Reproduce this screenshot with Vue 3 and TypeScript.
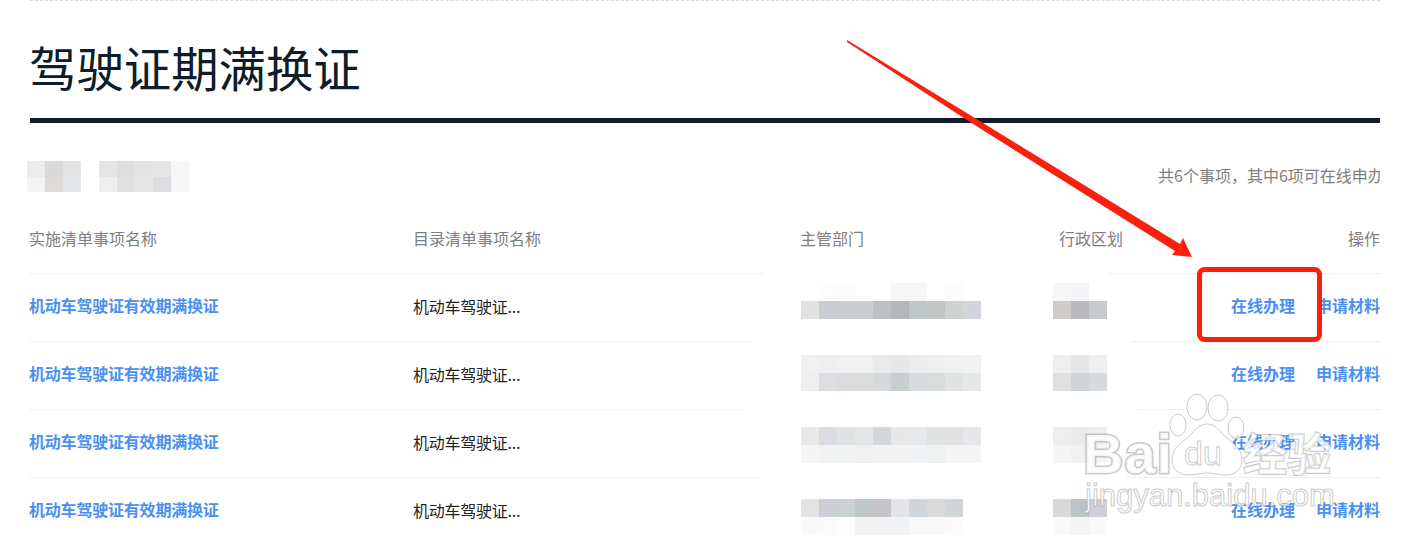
<script setup lang="ts">
type Row = {
  lineLeft: number
  lineRight: number
  shift: number
  dept: string[][]
  area: string[][]
}

const fullName = '机动车驾驶证有效期满换证'

const rows: Row[] = [
  {
    lineLeft: 733,
    lineRight: 271,
    shift: 9,
    dept: [
      ['#ffffff', '#fdfdfd', '#fcfcfc', '#ffffff', '#ffffff', '#f6f6f6', '#f5f6f5', '#ffffff', '#fcfcfc', '#ffffff'],
      ['#e0e2df', '#cbccd1', '#c9cdcf', '#cbcccd', '#bcc2c4', '#b4b6bb', '#bfc6c8', '#c3c6c4', '#d0d2d0', '#d3d5da']
    ],
    area: [
      ['#f6f6f6', '#f3f4f6', '#ffffff'],
      ['#cdccca', '#b9b9be', '#c8cbce']
    ]
  },
  {
    lineLeft: 720,
    lineRight: 249,
    shift: 13,
    dept: [
      ['#eff0f0', '#eeeef0', '#f0f0f1', '#f0f0f1', '#e9ebea', '#e7e9e8', '#ebecee', '#eeefef', '#eff1f0', '#f0f1f1'],
      ['#eeeeee', '#dddce1', '#d9dcde', '#dadcde', '#d5d9db', '#c9cfd1', '#d8dbdd', '#d9dcdd', '#e1e3e2', '#e6e7eb']
    ],
    area: [
      ['#eeeeee', '#e5e6e8', '#eeeff0'],
      ['#dfdfdf', '#d0d4d6', '#d7dadd']
    ]
  },
  {
    lineLeft: 714,
    lineRight: 243,
    shift: 17,
    dept: [
      ['#e9e9e8', '#dcdbe2', '#dfe2e3', '#e5e6e8', '#d3d8da', '#e7e8ea', '#e7e9ea', '#e1e3e3', '#e1e3e2', '#e6e7eb'],
      ['#f5f5f5', '#f2f3f5', '#f2f3f3', '#f0f0f0', '#f3f3f5', '#f3f3f4', '#f0f2f3', '#eff0f0', '#f5f5f5', '#f3f4f5']
    ],
    area: [
      ['#eeeeee', '#ebebed', '#efeff0'],
      ['#f5f5f5', '#f1f1f2', '#f5f5f6']
    ]
  },
  {
    lineLeft: 731,
    lineRight: 253,
    shift: 21,
    dept: [
      ['#e3e3e1', '#cdced6', '#cbd2d2', '#c1c7c9', '#c7c5cb', '#e3e4e8', '#d0d5da', '#dadbd9', '#d0d5da'],
      ['#fafafa', '#fbfbfb', '#fcfdfc', '#f3f3f4', '#f3f3f4', '#f2f3f5', '#f8f8f8', '#f8f8f8', '#fbfbfb']
    ],
    area: [
      ['#d7d8da', '#bcc3c5', '#cdd0d5'],
      ['#fafafa', '#f3f4f4', '#fafafa']
    ]
  }
]

const badgeA = [
  ['#ececed', '#dad9d8', '#e3e4e6'],
  ['#f4f4f4', '#dcdbd9', '#e5e6e8']
]
const badgeB = [
  ['#e5e5e6', '#dddee0', '#e4e4e5', '#e6e6e8', '#f7f7f7'],
  ['#eeeeee', '#e0e1e3', '#e5e5e6', '#dcdde0', '#f7f7f7']
]
</script>

<template>
  <div class="page">
    <div class="wrap">
      <h1 class="title"><span class="title-text">驾驶证期满换证</span></h1>

      <div class="summary">
        <div class="tags">
          <div class="mosaic tag">
            <div v-for="(line, i) in badgeA" :key="i" class="mline">
              <span v-for="(c, j) in line" :key="j" class="cell" :style="{ background: c }"></span>
            </div>
          </div>
          <div class="mosaic tag">
            <div v-for="(line, i) in badgeB" :key="i" class="mline">
              <span v-for="(c, j) in line" :key="j" class="cell" :style="{ background: c }"></span>
            </div>
          </div>
        </div>
        <div class="count">共6个事项，其中6项可在线申办</div>
      </div>

      <div class="grid head">
        <div>实施清单事项名称</div>
        <div>目录清单事项名称</div>
        <div>主管部门</div>
        <div class="head-area">行政区划</div>
        <div class="head-op">操作</div>
      </div>

      <div v-for="(row, idx) in rows" :key="idx" class="row">
        <div class="rule">
          <i class="seg" :style="{ width: row.lineLeft + 'px' }"></i>
          <i class="seg" :style="{ width: row.lineRight + 'px' }"></i>
        </div>
        <div class="grid body">
          <a class="link name">{{ fullName }}</a>
          <div class="catalog">机动车驾驶证...</div>
          <div class="mosaic dept" :style="{ marginTop: row.shift + 'px' }">
            <div v-for="(line, i) in row.dept" :key="i" class="mline">
              <span v-for="(c, j) in line" :key="j" class="cell" :style="{ background: c }"></span>
            </div>
          </div>
          <div class="mosaic area" :style="{ marginTop: row.shift + 'px' }">
            <div v-for="(line, i) in row.area" :key="i" class="mline">
              <span v-for="(c, j) in line" :key="j" class="cell" :style="{ background: c }"></span>
            </div>
          </div>
          <div class="ops">
            <a class="link">在线办理</a>
            <a class="link">申请材料</a>
          </div>
        </div>
      </div>
    </div>

    <svg class="overlay" width="1410" height="545" viewBox="0 0 1410 545">
      <g class="mark">
        <ellipse cx="1197" cy="407" rx="10" ry="13" />
        <ellipse cx="1218" cy="408" rx="10" ry="13" />
        <ellipse cx="1178" cy="425" rx="8" ry="11" />
        <ellipse cx="1236" cy="428" rx="8" ry="11" />
        <path d="M1207 424c-9 0-13 8-20 14-8 6-15 12-15 22 0 9 7 15 16 15 7 0 13-2 19-2s12 2 19 2c9 0 16-6 16-15 0-10-7-16-15-22-7-6-11-14-20-14z" />
        <text x="1083" y="473" class="mark-big">Bai</text>
        <text x="1184" y="465" class="mark-du">du</text>
        <text x="1243" y="471" class="mark-cn">经验</text>
        <text x="1085" y="506" class="mark-url">jingyan.baidu.com</text>
      </g>
      <polygon class="red" points="847,40 970,115 1180,244 1183,238 1192,257 1172,255 1175,251 970,122 847,42" />
      <rect class="box" x="1199.5" y="269.5" width="120" height="70" rx="5" />
    </svg>
  </div>
</template>

<style>
html,
body {
  margin: 0;
  background: #fff;
}
</style>

<style scoped>
.page {
  position: relative;
  width: 1410px;
  height: 545px;
  overflow: hidden;
  background: #fff;
  font-family: "Noto Sans CJK SC", "Noto Sans", sans-serif;
}
.wrap {
  margin: 0 30px;
  border-top: 1px dashed #dcdcdc;
}
.title {
  margin: 0;
  box-sizing: border-box;
  height: 122px;
  border-bottom: 5px solid #0f1c2a;
  padding-top: 31px;
  font-size: 47.4px;
  line-height: 70px;
  font-weight: 400;
  color: #0f1c2a;
  white-space: nowrap;
}
.title-text {
  margin-left: -1px;
}
.summary {
  display: flex;
  justify-content: space-between;
  align-items: center;
  margin-top: 38px;
  height: 31px;
}
.tags {
  display: flex;
  gap: 18px;
  margin-left: -3px;
}
.tag .cell {
  height: 15.5px;
}
.count {
  width: 222px;
  height: 28px;
  margin-top: -3px;
  overflow: hidden;
  white-space: nowrap;
  font-size: 16px;
  line-height: 28px;
  color: #7f7f7f;
}
.grid {
  display: grid;
}
.head {
  grid-template-columns: 383px 387px 259px 1fr auto;
  padding: 29px 0 18px;
  font-size: 16px;
  line-height: 34px;
  color: #808080;
}
.head > div:first-child {
  margin-left: -1px;
}
.head-op {
  text-align: right;
}
.row {
  height: 68px;
}
.rule {
  display: flex;
  justify-content: space-between;
  height: 1px;
}
.seg {
  display: block;
  height: 1px;
  background: #eeeeee;
}
.body {
  grid-template-columns: 383px 388px 252px 54px 1fr;
  height: 67px;
  align-items: center;
  font-size: 16px;
}
.link {
  color: #4a90f2;
  font-weight: 700;
  white-space: nowrap;
  font-size: 16px;
  margin-top: -6px;
}
.name {
  margin-left: -1px;
  letter-spacing: -0.2px;
}
.catalog {
  color: #1f2328;
  white-space: nowrap;
  margin-top: -4px;
  letter-spacing: -0.25px;
}
.mosaic {
  display: flex;
  flex-direction: column;
}
.dept,
.area {
  align-self: start;
}
.mline {
  display: flex;
}
.cell {
  display: block;
  width: 18px;
  height: 18px;
  flex: none;
}
.ops {
  display: flex;
  justify-content: flex-end;
  gap: 21px;
}
.overlay {
  position: absolute;
  left: 0;
  top: 0;
  pointer-events: none;
}
.red {
  fill: #fb1f0e;
}
.box {
  fill: none;
  stroke: #fb1f0e;
  stroke-width: 5;
}
.mark {
  fill: rgba(255, 255, 255, 0.8);
  stroke: rgba(150, 150, 150, 0.5);
  stroke-width: 1;
}
.mark text {
  font-family: "Liberation Sans", sans-serif;
  font-weight: 700;
}
.mark .mark-big {
  font-size: 56px;
  letter-spacing: 1px;
  stroke-width: 3;
  paint-order: stroke;
}
.mark .mark-du {
  font-size: 34px;
  font-weight: 400;
}
.mark .mark-cn {
  font-family: "Noto Sans CJK SC", sans-serif;
  font-size: 44px;
  font-weight: 700;
  stroke-width: 2;
  paint-order: stroke;
}
.mark .mark-url {
  font-size: 31px;
  font-weight: 400;
}
</style>
